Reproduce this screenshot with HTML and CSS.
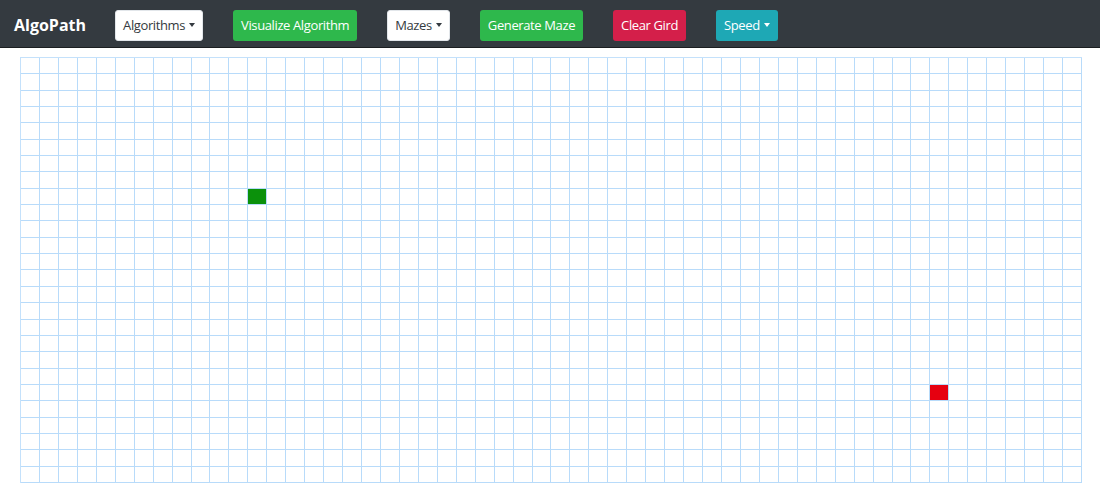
FILE: index.html
```html
<!DOCTYPE html>
<html lang="en">
<head>
    <meta charset="UTF-8">
    <meta name="viewport" content="width=device-width, initial-scale=1.0">
    <title>AlgoPath</title>
    <link rel="stylesheet" href="styles.css">
</head>
<body>
    <nav class="navbar">
        <a class="brand" href="#">AlgoPath</a>
        <div class="controls">
            <button class="btn btn-light">Algorithms<span class="caret"></span></button>
            <button class="btn btn-success">Visualize Algorithm</button>
            <button class="btn btn-light">Mazes<span class="caret"></span></button>
            <button class="btn btn-success">Generate Maze</button>
            <button class="btn btn-danger">Clear Gird</button>
            <button class="btn btn-info">Speed<span class="caret"></span></button>
        </div>
    </nav>

    <div class="board" id="board"></div>

    <script>
        const ROWS = 26;
        const COLS = 56;
        const start = { row: 8, col: 12 };
        const target = { row: 20, col: 48 };
        const board = document.getElementById('board');

        for (let r = 0; r < ROWS; r++) {
            for (let c = 0; c < COLS; c++) {
                const cell = document.createElement('div');
                cell.className = 'cell';
                if (r === start.row && c === start.col) cell.classList.add('start');
                if (r === target.row && c === target.col) cell.classList.add('target');
                board.appendChild(cell);
            }
        }
    </script>
</body>
</html>
```

FILE: styles.css
```css
* {
    margin: 0;
    padding: 0;
    box-sizing: border-box;
}

body {
    font-family: 'Open Sans', 'Noto Sans', sans-serif;
    background: #fff;
    color: #212529;
}

.navbar {
    height: 48px;
    background: #343a40;
    border-bottom: 1px solid #1b1e21;
    display: flex;
    align-items: center;
    padding: 3px 14px 0;
}

.brand {
    color: #fff;
    font-size: 16px;
    font-weight: 700;
    text-decoration: none;
    margin-right: 29px;
}

.controls {
    display: flex;
    gap: 30px;
}

.btn {
    height: 31px;
    padding: 0 7px;
    font-family: inherit;
    font-size: 13px;
    letter-spacing: -0.38px;
    border: 1px solid transparent;
    border-radius: 3px;
    color: #fff;
    cursor: pointer;
    display: flex;
    align-items: center;
    gap: 4px;
}

.btn-light {
    background: #fff;
    color: #343a40;
    border-color: #e2e6ea;
}

.btn-success {
    background: #2eb84c;
}

.btn-danger {
    background: #d41f4a;
}

.btn-info {
    background: #1ea8b5;
}

.caret {
    width: 0;
    height: 0;
    border-left: 3.5px solid transparent;
    border-right: 3.5px solid transparent;
    border-top: 4px solid currentColor;
}

.board {
    margin: 9px 0 0 20px;
    width: 1062px;
    height: 426px;
    display: grid;
    grid-template-columns: repeat(56, 1fr);
    grid-template-rows: repeat(26, 1fr);
    border-left: 1px solid #c4e1fb;
    border-top: 1px solid #c4e1fb;
}

.cell {
    border-right: 1px solid #b8dbfa;
    border-bottom: 1px solid #b8dbfa;
}

.cell.start {
    background: #0b910b;
}

.cell.target {
    background: #e60010;
}
```
